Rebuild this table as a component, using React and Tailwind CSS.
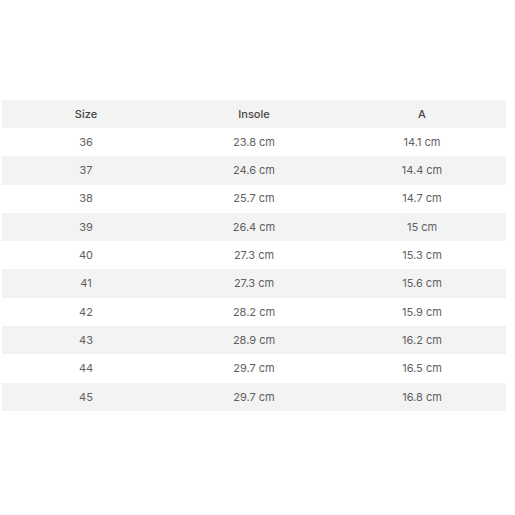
import React from 'react';

const rows = [
  ['36', '23.8 cm', '14.1 cm'],
  ['37', '24.6 cm', '14.4 cm'],
  ['38', '25.7 cm', '14.7 cm'],
  ['39', '26.4 cm', '15 cm'],
  ['40', '27.3 cm', '15.3 cm'],
  ['41', '27.3 cm', '15.6 cm'],
  ['42', '28.2 cm', '15.9 cm'],
  ['43', '28.9 cm', '16.2 cm'],
  ['44', '29.7 cm', '16.5 cm'],
  ['45', '29.7 cm', '16.8 cm'],
];

const App = () => {
  return (
    <div className="w-[515px] h-[515px] bg-white pt-[100px] pl-[2px]" style={{ fontFamily: 'Inter, sans-serif' }}>
      <div className="w-[504px] text-[11px] text-[#5f5f5f]">
        {/* Header */}
        <div className="grid grid-cols-3 h-[28px] items-center bg-[#f3f3f3] font-medium text-[#444]">
          <div className="text-center">Size</div>
          <div className="text-center">Insole</div>
          <div className="text-center">A</div>
        </div>
        {rows.map((r, i) => (
          <div
            key={r[0]}
            className={`grid grid-cols-3 h-[28.3px] items-center ${i % 2 === 1 ? 'bg-[#f3f3f3]' : 'bg-white'}`}
          >
            <div className="text-center">{r[0]}</div>
            <div className="text-center">{r[1]}</div>
            <div className="text-center">{r[2]}</div>
          </div>
        ))}
      </div>
    </div>
  );
};

export default App;
